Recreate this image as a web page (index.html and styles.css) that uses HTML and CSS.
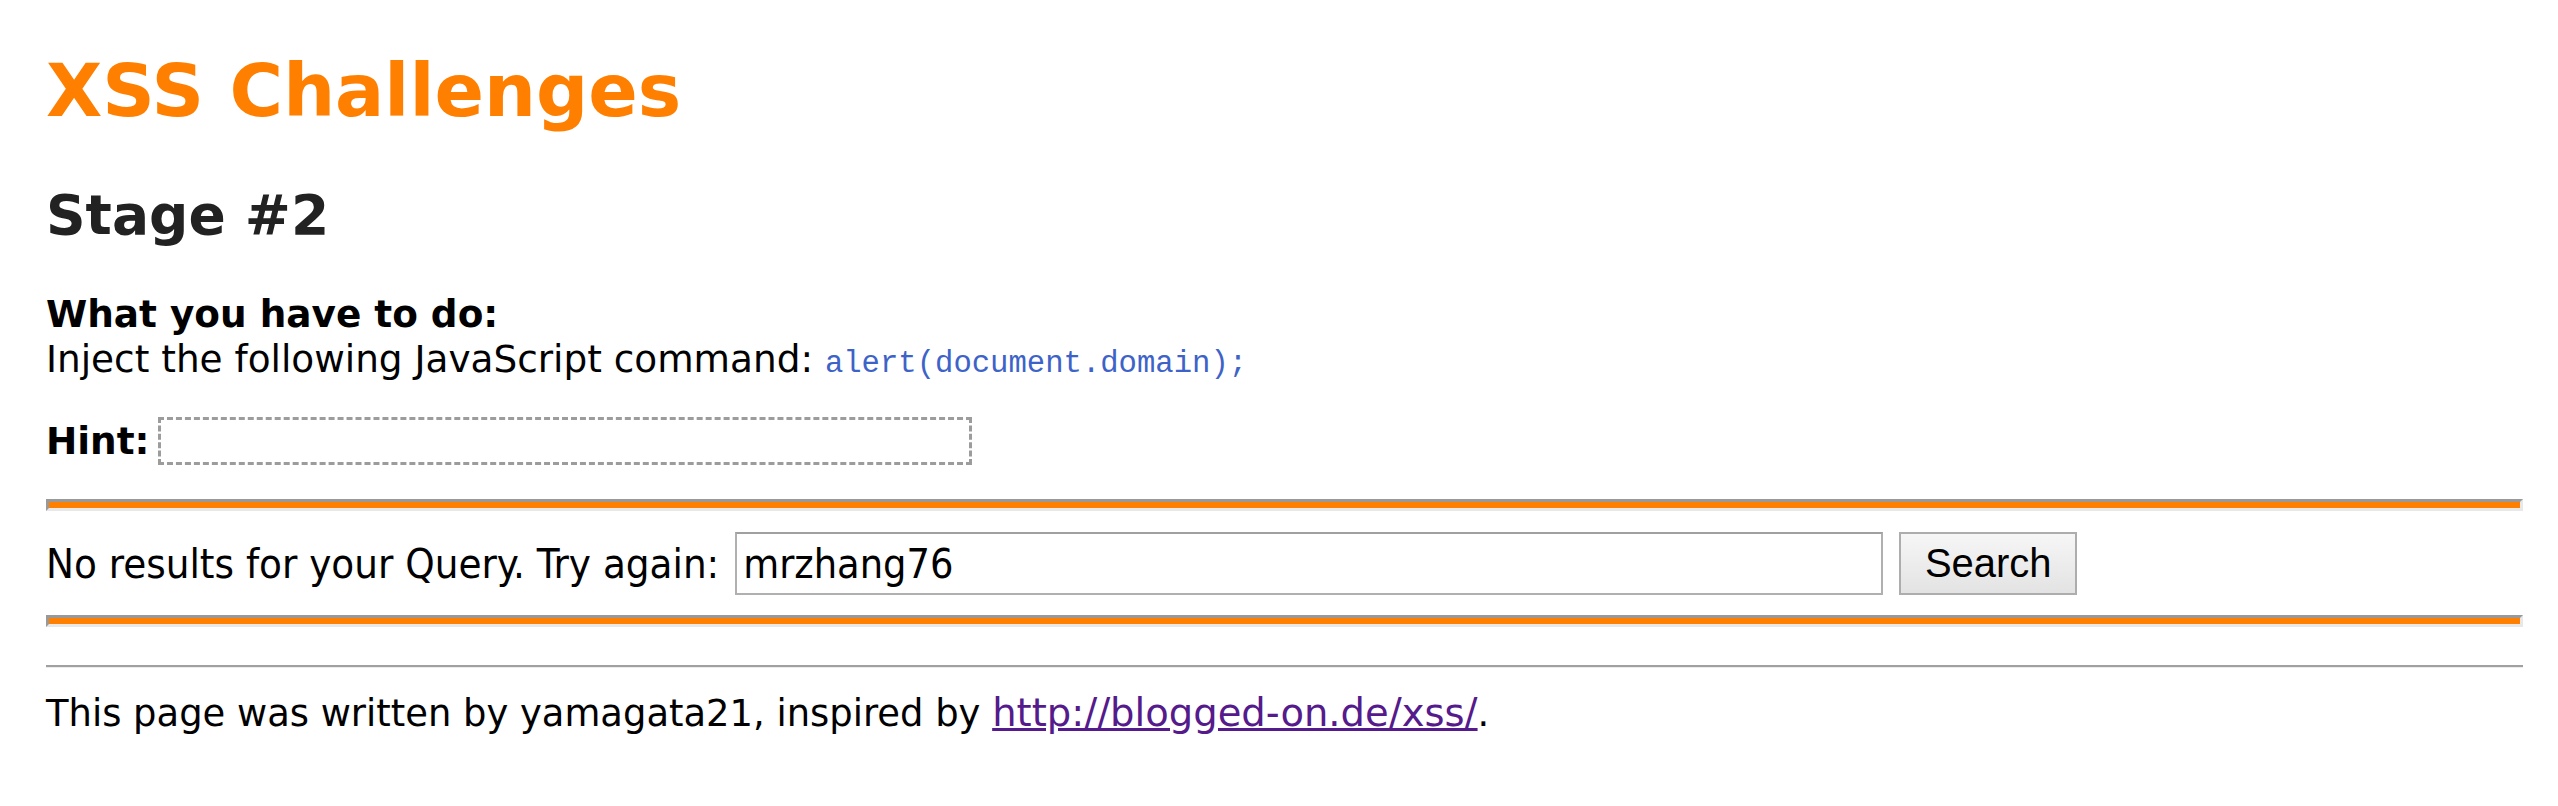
FILE: index.html
```html
<!DOCTYPE html>
<html>
<head>
<meta charset="utf-8">
<title>XSS Challenges (by yamagata21) - Stage #2</title>
<link rel="stylesheet" href="styles.css">
</head>
<body>
<div class="page">
  <h1 class="title">XSS Challenges</h1>
  <h2 class="stage">Stage #2</h2>
  <div class="task">
    <b>What you have to do:</b><br>
    Inject the following JavaScript command: <code class="cmd">alert(document.domain);</code>
  </div>
  <div class="hint"><b>Hint:</b><span class="hint-box"></span></div>
  <hr class="rule rule-top">
  <form class="search" onsubmit="return false">
    <span class="msg">No results for your Query. Try again:</span>
    <input class="query" type="text" value="mrzhang76">
    <input class="btn" type="submit" value="Search">
  </form>
  <hr class="rule rule-bottom">
  <hr class="thin">
  <p class="footer">This page was written by yamagata21, inspired by <a class="link" href="#">http://blogged-on.de/xss/</a>.</p>
</div>
</body>
</html>
```

FILE: styles.css
```css
html, body {
  background: #ffffff;
}
body {
  margin: 0;
  font-family: "DejaVu Sans", Verdana, sans-serif;
  font-size: 37.4px;
  line-height: 45px;
  color: #000000;
}
.page {
  padding: 49px 35px 40px 46px;
}
.title {
  margin: 0;
  font-size: 73px;
  line-height: 84px;
  font-weight: bold;
  color: #ff7f00;
}
.stage {
  margin: 51px 0 0;
  font-size: 55px;
  line-height: 63px;
  font-weight: bold;
  color: #222222;
}
.task {
  margin-top: 45px;
}
.cmd {
  font-family: "Liberation Mono", "DejaVu Sans Mono", monospace;
  font-size: 30.6px;
  line-height: 30px;
  color: #3d63c8;
}
.hint {
  display: flex;
  align-items: center;
  gap: 8px;
  margin-top: 35px;
}
.hint-box {
  width: 808px;
  height: 42px;
  border: 3px dashed #9c9c9c;
}
.rule {
  margin: 0;
  height: 6px;
  background: #ff8000;
  border-style: solid;
  border-width: 3px;
  border-color: #999999 #e8e8e8 #e8e8e8 #999999;
}
.rule-top {
  margin-top: 34px;
}
.rule-bottom {
  margin-top: 20px;
}
.search {
  display: flex;
  align-items: center;
  margin: 21px 0 0;
  font-family: "DejaVu Sans Condensed", "Liberation Sans", sans-serif;
  font-size: 41.6px;
}
.query {
  margin: 0 0 0 16px;
  width: 1148px;
  height: 63px;
  box-sizing: border-box;
  border: 2px solid #b0b0b0;
  border-top-color: #a0a0a0;
  padding: 0 6px;
  font-family: "DejaVu Sans Condensed", "Liberation Sans", sans-serif;
  font-size: 41px;
  color: #000000;
  background: #ffffff;
}
.btn {
  margin: 0 0 0 16px;
  width: 178px;
  height: 63px;
  box-sizing: border-box;
  border: 2px solid #adadad;
  border-radius: 0;
  padding: 0;
  background: linear-gradient(#f6f6f6, #e3e3e3);
  font-family: "Liberation Sans", Arial, sans-serif;
  font-size: 40px;
  color: #000000;
}
.thin {
  margin: 38px 0 0;
  height: 0;
  border: 0;
  border-top: 2px solid #a0a0a0;
  border-bottom: 1px solid #ececec;
}
.footer {
  margin: 22px 0 0;
  font-size: 36.9px;
}
.link {
  color: #551a8b;
  font-size: 38.5px;
}
```
